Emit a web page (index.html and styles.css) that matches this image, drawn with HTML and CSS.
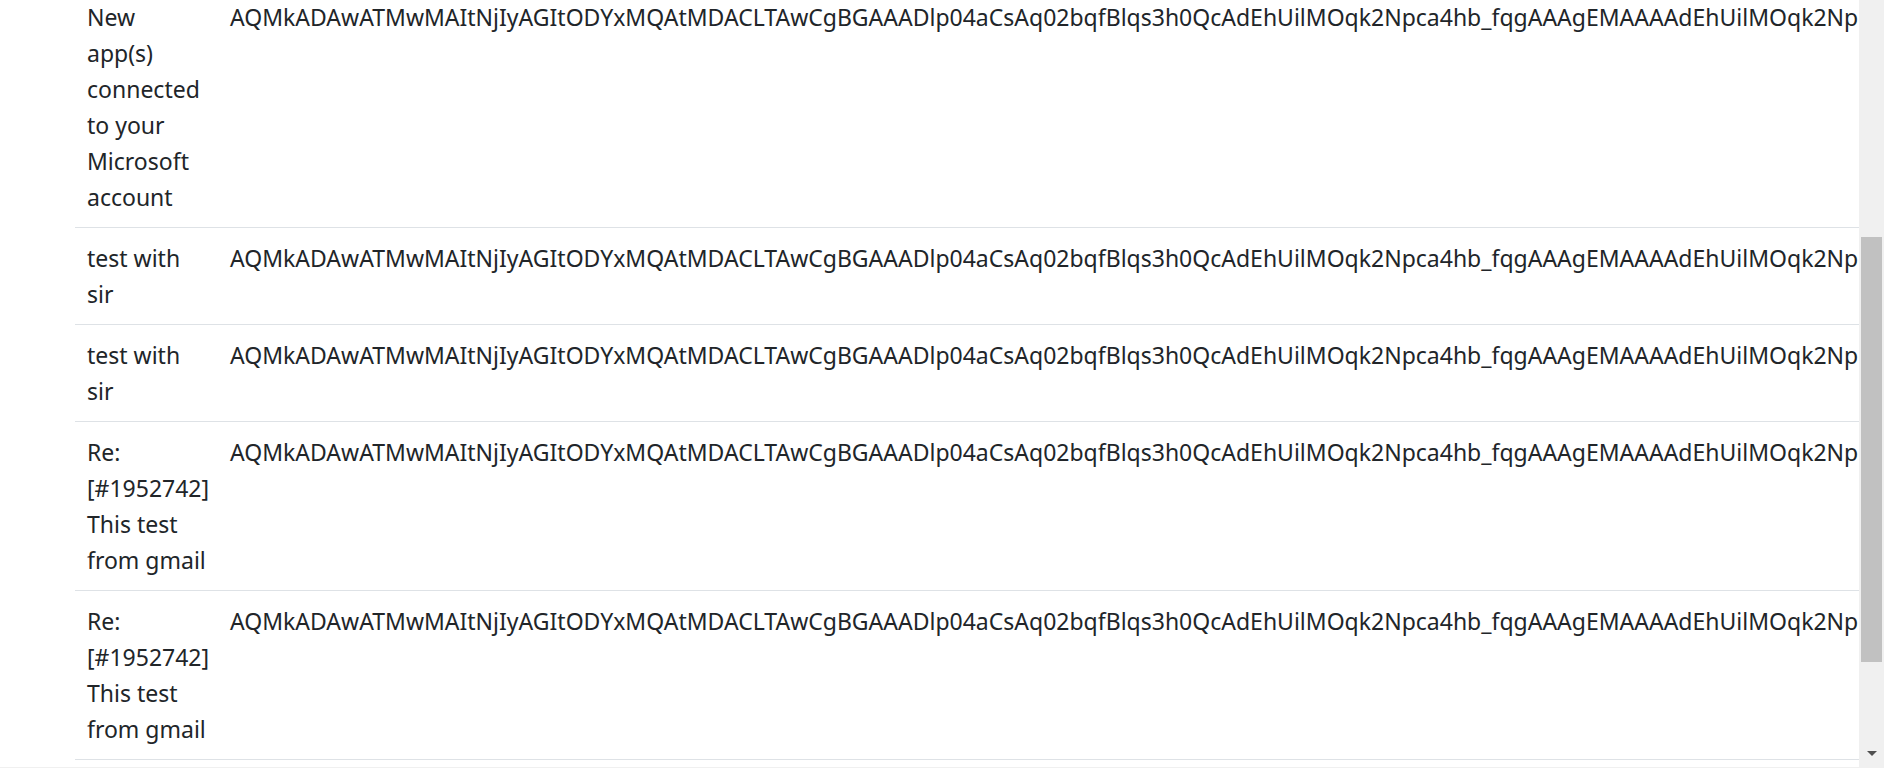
FILE: index.html
```html
<!DOCTYPE html>
<html lang="en">
<head>
<meta charset="utf-8">
<title>Messages</title>
<link rel="stylesheet" href="styles.css">
</head>
<body>
<div class="window">
  <div class="main">
    <div class="viewport">
      <div class="scroll-content">
        <table class="table">
          <tbody>
            <tr>
              <td class="subject">New app(s) connected to your Microsoft account</td>
              <td class="msgid">AQMkADAwATMwMAItNjIyAGItODYxMQAtMDACLTAwCgBGAAADlp04aCsAq02bqfBlqs3h0QcAdEhUilMOqk2Npca4hb_fqgAAAgEMAAAAdEhUilMOqk2Npca4hb_fqgAAAgHxAAAA</td>
            </tr>
            <tr>
              <td class="subject">test with sir</td>
              <td class="msgid">AQMkADAwATMwMAItNjIyAGItODYxMQAtMDACLTAwCgBGAAADlp04aCsAq02bqfBlqs3h0QcAdEhUilMOqk2Npca4hb_fqgAAAgEMAAAAdEhUilMOqk2Npca4hb_fqgAAAgHyAAAA</td>
            </tr>
            <tr>
              <td class="subject">test with sir</td>
              <td class="msgid">AQMkADAwATMwMAItNjIyAGItODYxMQAtMDACLTAwCgBGAAADlp04aCsAq02bqfBlqs3h0QcAdEhUilMOqk2Npca4hb_fqgAAAgEMAAAAdEhUilMOqk2Npca4hb_fqgAAAgHzAAAA</td>
            </tr>
            <tr>
              <td class="subject">Re: [#1952742] This test from gmail</td>
              <td class="msgid">AQMkADAwATMwMAItNjIyAGItODYxMQAtMDACLTAwCgBGAAADlp04aCsAq02bqfBlqs3h0QcAdEhUilMOqk2Npca4hb_fqgAAAgEMAAAAdEhUilMOqk2Npca4hb_fqgAAAgH0AAAA</td>
            </tr>
            <tr>
              <td class="subject">Re: [#1952742] This test from gmail</td>
              <td class="msgid">AQMkADAwATMwMAItNjIyAGItODYxMQAtMDACLTAwCgBGAAADlp04aCsAq02bqfBlqs3h0QcAdEhUilMOqk2Npca4hb_fqgAAAgEMAAAAdEhUilMOqk2Npca4hb_fqgAAAgH1AAAA</td>
            </tr>
            <tr>
              <td class="subject">Re: [#1952742] This test from gmail</td>
              <td class="msgid">AQMkADAwATMwMAItNjIyAGItODYxMQAtMDACLTAwCgBGAAADlp04aCsAq02bqfBlqs3h0QcAdEhUilMOqk2Npca4hb_fqgAAAgEMAAAAdEhUilMOqk2Npca4hb_fqgAAAgH2AAAA</td>
            </tr>
          </tbody>
        </table>
      </div>
    </div>
    <div class="vscroll">
      <div class="vscroll-space"></div>
      <div class="vscroll-thumb"></div>
      <div class="vscroll-rest"></div>
      <div class="vscroll-arrow"></div>
    </div>
  </div>
  <div class="hscroll"></div>
</div>
</body>
</html>
```
FILE: styles.css
```css
html, body {
  margin: 0;
  padding: 0;
  background: #ffffff;
}

body {
  font-family: "Noto Sans", "Open Sans", sans-serif;
  font-size: 23px;
  line-height: 36px;
  color: #212529;
}

.window {
  width: 1884px;
  height: 768px;
  display: flex;
  flex-direction: column;
  overflow: hidden;
}

.main {
  flex: 1;
  display: flex;
  min-height: 0;
}

.viewport {
  flex: 1;
  min-width: 0;
  overflow: hidden;
}

/* emulates the scrolled position of the page */
.scroll-content {
  padding-left: 75px;
  margin-top: -14px;
}

.table {
  border-collapse: collapse;
}

.table td {
  padding: 12px;
  vertical-align: top;
  border-top: 1px solid #dee2e6;
  border-bottom: 1px solid #dee2e6;
}

.subject {
  width: 119px;
  min-width: 119px;
  max-width: 119px;
}

.msgid {
  white-space: nowrap;
}

.vscroll {
  width: 25px;
  flex: 0 0 25px;
  background: #f0f0f0;
  display: flex;
  flex-direction: column;
  align-items: center;
}

.vscroll-space {
  height: 237px;
  flex: 0 0 237px;
}

.vscroll-thumb {
  width: 21px;
  height: 425px;
  flex: 0 0 425px;
  background: #c1c1c1;
}

.vscroll-rest {
  flex: 1;
}

.vscroll-arrow {
  width: 0;
  height: 0;
  border-left: 5px solid transparent;
  border-right: 5px solid transparent;
  border-top: 5px solid #505050;
  margin-bottom: 11px;
}

.hscroll {
  height: 1px;
  flex: 0 0 1px;
  background: #f0f0f0;
}
```
